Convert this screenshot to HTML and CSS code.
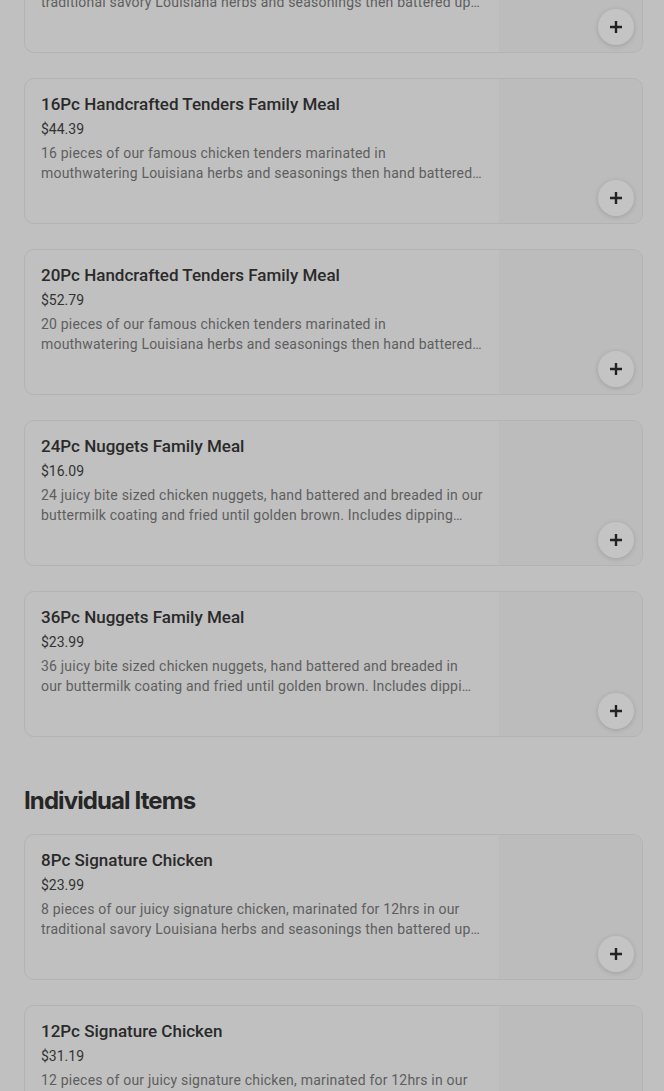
FILE: index.html
```html
<!DOCTYPE html>
<html>
<head>
<meta charset="utf-8">
<link rel="stylesheet" href="styles.css">
</head>
<body>
<div class="page">
  <div class="list">
    <div class="card">
      <div class="info">
        <div class="title">8Pc Signature Chicken</div>
        <div class="price">$23.99</div>
        <div class="desc">8 pieces of our juicy signature chicken, marinated for 12hrs in our traditional savory Louisiana herbs and seasonings then battered up and fried</div>
      </div>
      <div class="media"><button class="add"><svg width="14" height="14" viewBox="0 0 14 14"><path d="M7 1v12M1 7h12" stroke="#222" stroke-width="2.4"/></svg></button></div>
    </div>
    <div class="card">
      <div class="info">
        <div class="title">16Pc Handcrafted Tenders Family Meal</div>
        <div class="price">$44.39</div>
        <div class="desc">16 pieces of our famous chicken tenders marinated in mouthwatering Louisiana herbs and seasonings then hand battered and fried</div>
      </div>
      <div class="media"><button class="add"><svg width="14" height="14" viewBox="0 0 14 14"><path d="M7 1v12M1 7h12" stroke="#222" stroke-width="2.4"/></svg></button></div>
    </div>
    <div class="card">
      <div class="info">
        <div class="title">20Pc Handcrafted Tenders Family Meal</div>
        <div class="price">$52.79</div>
        <div class="desc">20 pieces of our famous chicken tenders marinated in mouthwatering Louisiana herbs and seasonings then hand battered and fried</div>
      </div>
      <div class="media"><button class="add"><svg width="14" height="14" viewBox="0 0 14 14"><path d="M7 1v12M1 7h12" stroke="#222" stroke-width="2.4"/></svg></button></div>
    </div>
    <div class="card">
      <div class="info">
        <div class="title">24Pc Nuggets Family Meal</div>
        <div class="price">$16.09</div>
        <div class="desc">24 juicy bite sized chicken nuggets, hand battered and breaded in our buttermilk coating and fried until golden brown. Includes dipping sauces</div>
      </div>
      <div class="media"><button class="add"><svg width="14" height="14" viewBox="0 0 14 14"><path d="M7 1v12M1 7h12" stroke="#222" stroke-width="2.4"/></svg></button></div>
    </div>
    <div class="card">
      <div class="info">
        <div class="title">36Pc Nuggets Family Meal</div>
        <div class="price">$23.99</div>
        <div class="desc narrow">36 juicy bite sized chicken nuggets, hand battered and breaded in our buttermilk coating and fried until golden brown. Includes dipping sauces</div>
      </div>
      <div class="media"><button class="add"><svg width="14" height="14" viewBox="0 0 14 14"><path d="M7 1v12M1 7h12" stroke="#222" stroke-width="2.4"/></svg></button></div>
    </div>
  </div>
  <h2 class="section">Individual Items</h2>
  <div class="list">
    <div class="card">
      <div class="info">
        <div class="title">8Pc Signature Chicken</div>
        <div class="price">$23.99</div>
        <div class="desc">8 pieces of our juicy signature chicken, marinated for 12hrs in our traditional savory Louisiana herbs and seasonings then battered up and fried</div>
      </div>
      <div class="media"><button class="add"><svg width="14" height="14" viewBox="0 0 14 14"><path d="M7 1v12M1 7h12" stroke="#222" stroke-width="2.4"/></svg></button></div>
    </div>
    <div class="card">
      <div class="info">
        <div class="title">12Pc Signature Chicken</div>
        <div class="price">$31.19</div>
        <div class="desc">12 pieces of our juicy signature chicken, marinated for 12hrs in our traditional savory Louisiana herbs and seasonings then battered up and fried</div>
      </div>
      <div class="media"><button class="add"><svg width="14" height="14" viewBox="0 0 14 14"><path d="M7 1v12M1 7h12" stroke="#222" stroke-width="2.4"/></svg></button></div>
    </div>
  </div>
</div>
</body>
</html>
```
FILE: styles.css
```css
html, body {
  margin: 0;
  padding: 0;
  background: #c0c0c0;
  overflow: hidden;
}
.page {
  padding: 0 21px 0 24px;
  margin-top: -93px;
  font-family: Roboto, "Noto Sans", sans-serif;
}
.list {
  display: flex;
  flex-direction: column;
  gap: 25px;
}
.card {
  display: flex;
  height: 144px;
  border: 1px solid #b3b3b3;
  border-radius: 10px;
  overflow: hidden;
  background: #c0c0c0;
}
.info {
  flex: 1;
  padding: 15px 16px 0 16px;
  min-width: 0;
}
.title {
  font-size: 17px;
  line-height: 20px;
  font-weight: 500;
  color: #2a2a2a;
}
.price {
  margin-top: 5px;
  font-size: 14px;
  line-height: 20px;
  color: #333333;
}
.desc {
  margin-top: 4px;
  font-size: 14px;
  line-height: 20px;
  letter-spacing: 0.2px;
  color: #5e5e5e;
  max-width: 443px;
  display: -webkit-box;
  -webkit-line-clamp: 2;
  -webkit-box-orient: vertical;
  overflow: hidden;
}
.desc.narrow {
  max-width: 438px;
}
.media {
  width: 143px;
  background: #bcbcbc;
  display: flex;
  align-items: flex-end;
  justify-content: flex-end;
  padding: 0 8px 7px 0;
  box-sizing: border-box;
}
.add {
  width: 36px;
  height: 36px;
  border-radius: 50%;
  border: none;
  background: #c4c4c4;
  box-shadow: 0 1px 5px rgba(0,0,0,0.16);
  display: flex;
  align-items: center;
  justify-content: center;
  padding: 0;
}
.section {
  margin: 49px 0 18px 0;
  font-family: Inter, "Noto Sans", sans-serif;
  font-size: 24px;
  line-height: 30px;
  font-weight: 700;
  letter-spacing: -0.9px;
  color: #262626;
}
```
